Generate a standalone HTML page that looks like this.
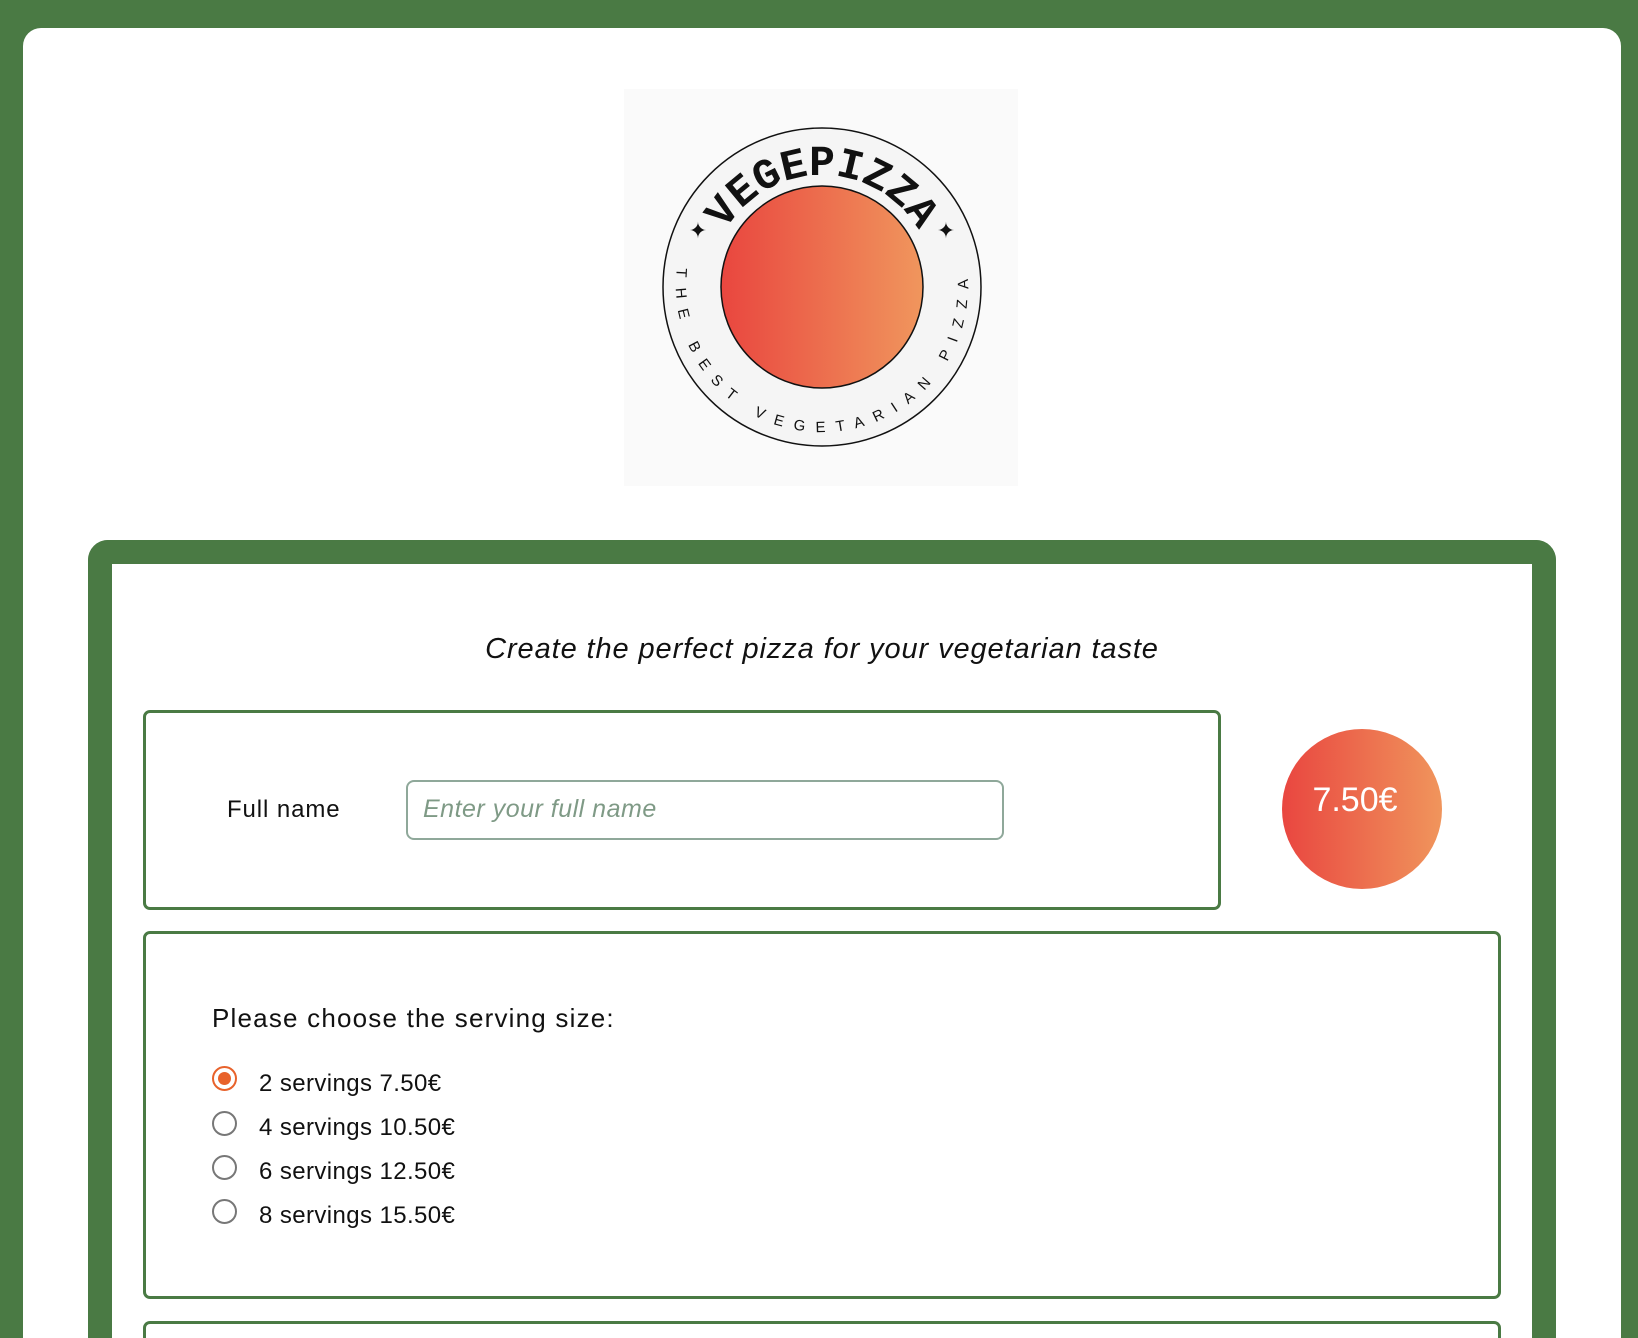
<!DOCTYPE html>
<html><head><meta charset="utf-8"><style>
*{box-sizing:border-box;margin:0;padding:0}
html,body{width:1638px;height:1338px;overflow:hidden}
body{background:#4a7a44;position:relative;font-family:"Liberation Sans",sans-serif;color:#111}
.card{position:absolute;left:23px;top:28px;width:1598px;height:1310px;background:#fff;border-radius:18px 18px 0 0}
.logo{position:absolute;left:624px;top:89px;width:394px;height:397px;background:#fafafa}
.form{position:absolute;left:88px;top:540px;width:1468px;height:798px;border:24px solid #4a7a44;border-bottom:none;border-radius:20px 20px 0 0;background:#fff}
.abs{position:absolute}
.title{left:0;width:1644px;top:633px;text-align:center;font-style:italic;font-size:29px;letter-spacing:0.9px}
.box{border:3px solid #4a7a44;border-radius:7px}
.input{left:406px;top:780px;width:598px;height:60px;border:2px solid #8fa89a;border-radius:8px;font-style:italic;color:#7f9a86;font-size:25px;padding:13px 0 0 15px;letter-spacing:0.5px}
.price{left:1282px;top:729px;width:160px;height:160px;border-radius:50%;background:linear-gradient(90deg,#e94640,#f0955c);color:#fff;font-size:34px;text-align:center;padding-top:52px;padding-right:14px}
.radio{width:25px;height:25px;border:2px solid #777;border-radius:50%}
.lbl{font-size:24px;letter-spacing:0.4px}
</style></head><body>
<div class="card"></div>
<div class="logo"><svg width="394" height="397" viewBox="0 0 394 397">
<defs><linearGradient id="g" x1="0" x2="1"><stop offset="0" stop-color="#e9463f"/><stop offset="1" stop-color="#f0965d"/></linearGradient>
<path id="top" d="M 86 198 A 112 112 0 0 1 310 198"/>
<path id="bot" d="M 54 173 A 146 146 0 1 0 342 173"/></defs>
<circle cx="198" cy="198" r="159" fill="#f5f5f5" stroke="#111" stroke-width="1.5"/>
<circle cx="198" cy="198" r="101" fill="url(#g)" stroke="#111" stroke-width="1.5"/>
<text font-family="Liberation Mono,monospace" font-weight="bold" font-size="43" fill="#111"><textPath href="#top" startOffset="50%" text-anchor="middle">VEGEPIZZA</textPath></text>
<text font-family="Liberation Sans,sans-serif" font-size="15" letter-spacing="11" fill="#111"><textPath href="#bot" startOffset="50%" text-anchor="middle">THE BEST VEGETARIAN PIZZA</textPath></text>
<text x="74" y="149" font-size="22" text-anchor="middle" fill="#111">✦</text><text x="322" y="149" font-size="22" text-anchor="middle" fill="#111">✦</text>
</svg></div>
<div class="form"></div>
<div class="abs title">Create the perfect pizza for your vegetarian taste</div>
<div class="abs box" style="left:143px;top:710px;width:1078px;height:200px"></div>
<div class="abs lbl" style="left:227px;top:796px;letter-spacing:0.9px">Full name</div>
<div class="abs input">Enter your full name</div>
<div class="abs price">7.50€</div>
<div class="abs box" style="left:143px;top:931px;width:1358px;height:368px"></div>
<div class="abs" style="left:212px;top:1003px;font-size:26px;letter-spacing:1.2px">Please choose the serving size:</div>
<div class="abs radio" style="left:212px;top:1066px;border-color:#e8622b"><div style="margin:4px;width:13px;height:13px;border-radius:50%;background:#e8622b"></div></div>
<div class="abs radio" style="left:212px;top:1111px"></div>
<div class="abs radio" style="left:212px;top:1155px"></div>
<div class="abs radio" style="left:212px;top:1199px"></div>
<div class="abs lbl" style="left:259px;top:1070px">2 servings 7.50€</div>
<div class="abs lbl" style="left:259px;top:1114px">4 servings 10.50€</div>
<div class="abs lbl" style="left:259px;top:1158px">6 servings 12.50€</div>
<div class="abs lbl" style="left:259px;top:1202px">8 servings 15.50€</div>
<div class="abs box" style="left:143px;top:1321px;width:1358px;height:17px;border-bottom:none;border-radius:7px 7px 0 0"></div>
</body></html>
